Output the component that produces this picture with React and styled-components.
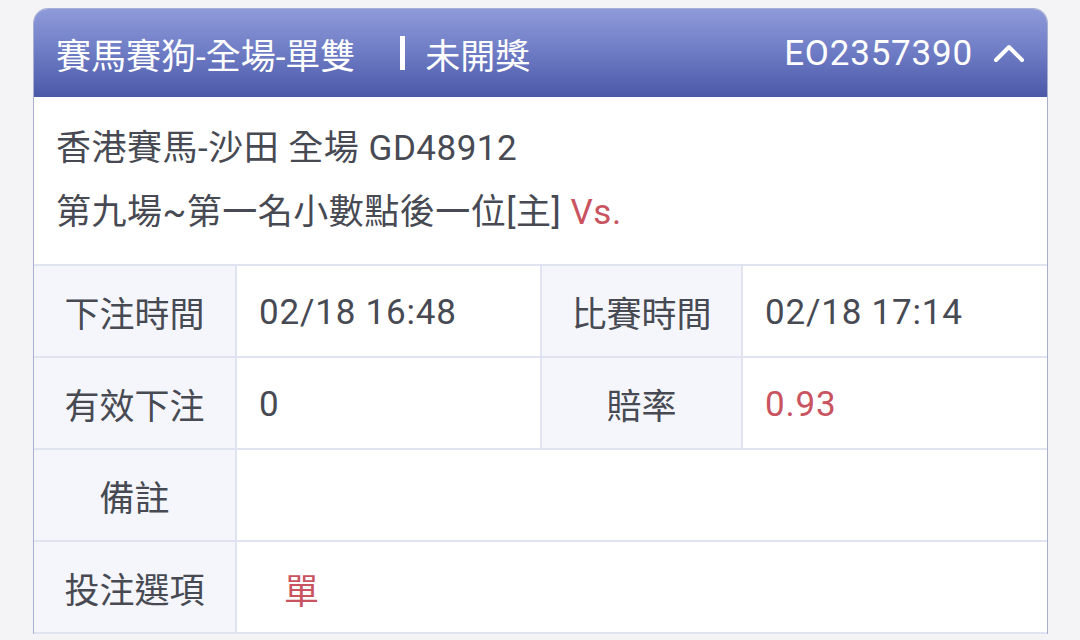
import React from 'react';
import styled, { createGlobalStyle } from 'styled-components';

const GlobalStyle = createGlobalStyle`
  html, body {
    margin: 0;
    padding: 0;
    background: #f4f4f6;
  }
  body {
    font-family: Roboto, "Noto Sans CJK TC", "Noto Sans", sans-serif;
    color: #474a53;
  }
`;

const Page = styled.div`
  padding: 8px 32px 0 33px;
  height: 640px;
  box-sizing: border-box;
  overflow: hidden;
`;

const Card = styled.div`
  background: #fff;
  border: 1.5px solid #a9afd0;
  border-bottom: none;
  border-radius: 15px 15px 0 0;
  overflow: hidden;
`;

const Header = styled.div`
  height: 88px;
  display: flex;
  align-items: center;
  padding: 0 22px;
  background: linear-gradient(180deg, #8e9ad9 0%, #6d7bc4 50%, #4b58a8 100%);
  color: #fff;
  font-size: 35px;
`;

const Title = styled.div`
  display: flex;
  align-items: center;
  flex: 1;
`;

const Divider = styled.span`
  display: inline-block;
  width: 5px;
  height: 34px;
  background: #fff;
  margin: 0 20px 0 45px;
`;

const OrderNo = styled.div`
  display: flex;
  align-items: center;
  gap: 20px;
  letter-spacing: 0.8px;
`;

const Info = styled.div`
  padding: 20px 22px 19px;
  font-size: 35px;
  line-height: 64px;
  letter-spacing: 0.5px;
  white-space: nowrap;
`;

const Red = styled.span`
  color: #c9545f;
`;

const Table = styled.div`
  display: grid;
  grid-template-columns: 203px 305px 201px 1fr;
  border-top: 2px solid #e0e3f0;
`;

const Cell = styled.div`
  height: 90px;
  box-sizing: border-box;
  display: flex;
  align-items: center;
  font-size: 35px;
  border-bottom: 2px solid #e0e3f0;
  border-right: ${p => (p.$last ? 'none' : '2px solid #e0e3f0')};
  grid-column: ${p => p.$span || 'auto'};
`;

const Label = styled(Cell)`
  height: 92px;
  justify-content: center;
  background: #f5f6fb;
`;

const Value = styled(Cell)`
  height: 92px;
  padding: 3px 0 0 ${p => p.$indent || 22}px;
  letter-spacing: 0.8px;
  color: ${p => (p.$red ? '#c9545f' : '#474a53')};
  background: #fff;
`;

const Chevron = () => (
  <svg width="32" height="22" viewBox="0 0 32 22" fill="none">
    <path d="M3 18 L16 5 L29 18" stroke="#fff" strokeWidth="4" strokeLinecap="round" strokeLinejoin="round" />
  </svg>
);

export default function App() {
  return (
    <>
      <GlobalStyle />
      <Page>
        <Card>
          <Header>
            <Title>
              賽馬賽狗-全場-單雙
              <Divider />
              未開獎
            </Title>
            <OrderNo>
              EO2357390
              <Chevron />
            </OrderNo>
          </Header>
          <Info>
            <div>香港賽馬-沙田 全場 GD48912</div>
            <div>第九場~第一名小數點後一位[主] <Red>Vs.</Red></div>
          </Info>
          <Table>
            <Label>下注時間</Label>
            <Value>02/18 16:48</Value>
            <Label>比賽時間</Label>
            <Value $last>02/18 17:14</Value>

            <Label>有效下注</Label>
            <Value>0</Value>
            <Label>賠率</Label>
            <Value $last $red>0.93</Value>

            <Label>備註</Label>
            <Value $last $span="2 / 5" />

            <Label>投注選項</Label>
            <Value $last $red $indent={47} $span="2 / 5">單</Value>
          </Table>
        </Card>
      </Page>
    </>
  );
}
